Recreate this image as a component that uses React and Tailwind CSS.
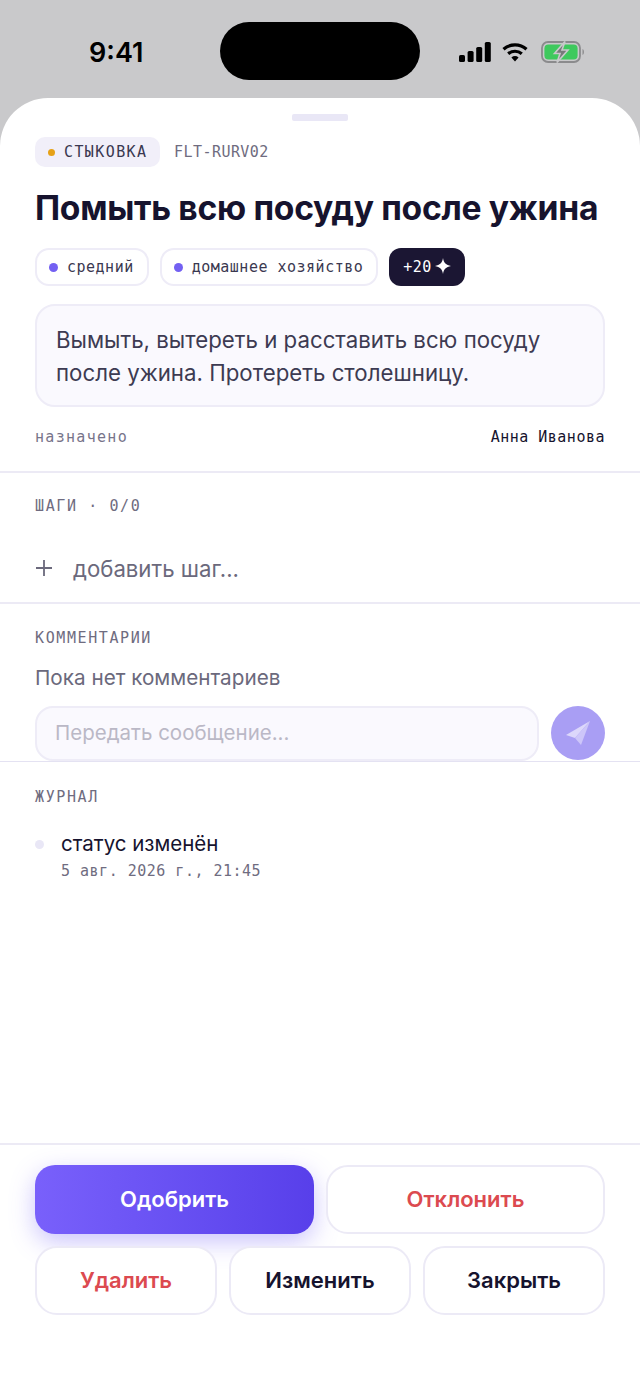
const MONO = "font-['DejaVu_Sans_Mono',monospace]"

function StatusIcons() {
  return (
    <div className="flex items-center">
      {/* signal */}
      <svg width="32" height="20" viewBox="0 0 32 20" fill="#000">
        <rect x="0" y="13" width="6" height="7" rx="1.6" />
        <rect x="8.6" y="9" width="6" height="11" rx="1.6" />
        <rect x="17.2" y="5" width="6" height="15" rx="1.6" />
        <rect x="25.8" y="0" width="6" height="20" rx="1.6" />
      </svg>
      {/* wifi */}
      <svg width="26" height="20" viewBox="0 0 26 20" fill="none" className="ml-[11px]">
        <path d="M1.5 7.2 C8 1.4 18 1.4 24.5 7.2" stroke="#000" strokeWidth="3.2" />
        <path d="M6.2 11.8 C10.2 8.4 15.8 8.4 19.8 11.8" stroke="#000" strokeWidth="3.2" />
        <path d="M9.4 15.4 L13 19.4 L16.6 15.4 C14.4 13.6 11.6 13.6 9.4 15.4 Z" fill="#000" />
      </svg>
      {/* battery */}
      <svg width="44" height="22" viewBox="0 0 44 22" fill="none" className="ml-[13px]">
        <rect x="1" y="1" width="38" height="20" rx="6" stroke="#8b8b8d" strokeWidth="1.8" />
        <rect x="3.4" y="3.4" width="33.2" height="15.2" rx="4" fill="#3ec95d" />
        <path d="M41.5 8 C43.4 8.6 43.4 13.4 41.5 14 Z" fill="#8b8b8d" />
        <path d="M24 0.5 L13.5 12.5 H19 L16 21.5 L27 9 H21 Z" fill="#77797a" stroke="#c9c9cb" strokeWidth="1.6" />
      </svg>
    </div>
  )
}

function Tag({ children }) {
  return (
    <span className={`flex h-[38px] items-center gap-[9px] rounded-[14px] border-2 border-[#eeecf7] bg-white pl-[12px] pr-[13px] text-[15px] tracking-[0.5px] text-[#3a3850] ${MONO}`}>
      <span className="h-[9px] w-[9px] rounded-full bg-[#7360f2]" />
      {children}
    </span>
  )
}

function Label({ children }) {
  return <div className={`text-[15px] leading-[20px] tracking-[1.6px] text-[#6f6c80] ${MONO}`}>{children}</div>
}

function OutlineButton({ color, children }) {
  return (
    <button className={`flex h-[69px] items-center justify-center rounded-[22px] border-2 border-[#eceaf6] bg-white text-[22px] font-semibold ${color}`}>
      {children}
    </button>
  )
}

export default function App() {
  return (
    <div className="flex h-[1391px] w-[640px] flex-col bg-[#c9c9cb] font-['Inter',sans-serif]">
      <div className="relative flex h-[98px] shrink-0 items-start justify-between pl-[89px] pr-[55px] pt-[36px]">
        <span className="text-[27px] font-semibold leading-[34px] text-black">9:41</span>
        <div className="absolute left-[220px] top-[22px] h-[58px] w-[200px] rounded-[29px] bg-black" />
        <div className="pt-[5px]">
          <StatusIcons />
        </div>
      </div>

      <div className="flex min-h-0 flex-1 flex-col rounded-t-[48px] bg-white">
        <div className="mx-auto mt-[16px] h-[7px] w-[56px] shrink-0 rounded-[2px] bg-[#e9e7f6]" />

        <div className="px-[35px] pt-[16px]">
          <div className="flex items-center gap-[14px]">
            <span className={`flex h-[30px] w-[125px] items-center gap-[9px] rounded-[10px] bg-[#f1eff9] pl-[13px] text-[15px] tracking-[1.4px] text-[#3a3850] ${MONO}`}>
              <span className="h-[7px] w-[7px] rounded-full bg-[#e6a117]" />
              <span className="pt-[1px]">СТЫКОВКА</span>
            </span>
            <span className={`pt-[1px] text-[15px] tracking-[0.45px] text-[#6f6c80] ${MONO}`}>FLT-RURV02</span>
          </div>

          <h1 className="mt-[19px] whitespace-nowrap text-[33.65px] font-bold leading-[44px] tracking-[-0.3px] text-[#16132e]">
            Помыть всю посуду после ужина
          </h1>

          <div className="mt-[18px] flex items-center gap-[11px]">
            <Tag>средний</Tag>
            <Tag>домашнее хозяйство</Tag>
            <span className={`flex h-[38px] items-center gap-[3px] rounded-[12px] bg-[#1b1633] pl-[14px] pr-[14px] text-[15px] tracking-[0.5px] text-white ${MONO}`}>
              +20
              <svg width="16" height="16" viewBox="0 0 16 16" fill="#fff" className="-mt-[3px]">
                <path d="M8 0 C8.8 4.8 11 7.1 16 8 C11 8.9 8.8 11.2 8 16 C7.2 11.2 5 8.9 0 8 C5 7.1 7.2 4.8 8 0 Z" />
              </svg>
            </span>
          </div>

          <div className="mt-[18px] rounded-[20px] border-2 border-[#eeecf7] bg-[#faf9fe] px-[19px] pb-[16px] pt-[17px] text-[22.25px] leading-[33px] text-[#3d3b52]">
            Вымыть, вытереть и расставить всю посуду после ужина. Протереть столешницу.
          </div>

          <div className={`mt-[19px] flex items-center justify-between text-[15px] ${MONO}`}>
            <span className="tracking-[1.3px] text-[#77748a]">назначено</span>
            <span className="tracking-[0.5px] text-[#16132e]">Анна Иванова</span>
          </div>
        </div>

        <div className="mt-[22px] h-[2px] shrink-0 bg-[#eceaf5]" />

        <div className="px-[35px] pt-[23px]">
          <Label>ШАГИ · 0/0</Label>
          <div className="mt-[36px] flex items-center gap-[20px] text-[22.2px] text-[#6b697c]">
            <svg width="18" height="18" viewBox="0 0 18 18" stroke="#6b697c" strokeWidth="1.8" fill="none">
              <path d="M9 1 V17 M1 9 H17" />
            </svg>
            добавить шаг...
          </div>
        </div>

        <div className="mt-[17px] h-[2px] shrink-0 bg-[#eceaf5]" />

        <div className="px-[35px] pt-[24px]">
          <Label>КОММЕНТАРИИ</Label>
          <p className="mt-[16px] text-[20.7px] leading-[28px] text-[#6b697c]">Пока нет комментариев</p>
          <div className="mt-[14px] flex items-center gap-[12px]">
            <div className="flex h-[55px] flex-1 items-center rounded-[18px] border-2 border-[#eeecf7] bg-[#faf9fe] pl-[18px] text-[20.5px] text-[#bab8c6]">
              Передать сообщение...
            </div>
            <button className="flex h-[54px] w-[54px] items-center justify-center rounded-full bg-[#a99ef4]">
              <svg width="24" height="24" viewBox="0 0 24 24">
                <path d="M24 0 L0 14 L9 17 Z" fill="#dcd7fb" />
                <path d="M24 0 L9 17 L15 24 Z" fill="#cdc6f9" />
              </svg>
            </button>
          </div>
        </div>

        <div className="h-[1px] shrink-0 bg-[#e4e2f2]" />

        <div className="flex-1 px-[35px] pt-[25px]">
          <Label>ЖУРНАЛ</Label>
          <div className="mt-[22px] flex items-start gap-[17px]">
            <span className="mt-[11px] h-[9px] w-[9px] rounded-full bg-[#e9e7f6]" />
            <div>
              <div className="text-[20.5px] leading-[30px] text-[#16132e]">статус изменён</div>
              <div className={`mt-[1px] text-[15px] leading-[22px] tracking-[0.5px] text-[#6f6c80] ${MONO}`}>5 авг. 2026 г., 21:45</div>
            </div>
          </div>
        </div>

        <div className="shrink-0 border-t-2 border-[#eceaf5] px-[35px] pb-[76px] pt-[20px]">
          <div className="grid grid-cols-2 gap-[12px]">
            <button className="flex h-[69px] items-center justify-center rounded-[20px] bg-gradient-to-r from-[#7960fb] to-[#583fea] text-[22px] font-semibold text-white shadow-[0_8px_24px_rgba(105,85,245,0.35)]">
              Одобрить
            </button>
            <OutlineButton color="text-[#dc4a50]">Отклонить</OutlineButton>
          </div>
          <div className="mt-[12px] grid grid-cols-3 gap-[12px]">
            <OutlineButton color="text-[#dc4a50]">Удалить</OutlineButton>
            <OutlineButton color="text-[#16132e]">Изменить</OutlineButton>
            <OutlineButton color="text-[#16132e]">Закрыть</OutlineButton>
          </div>
        </div>
      </div>
    </div>
  )
}
